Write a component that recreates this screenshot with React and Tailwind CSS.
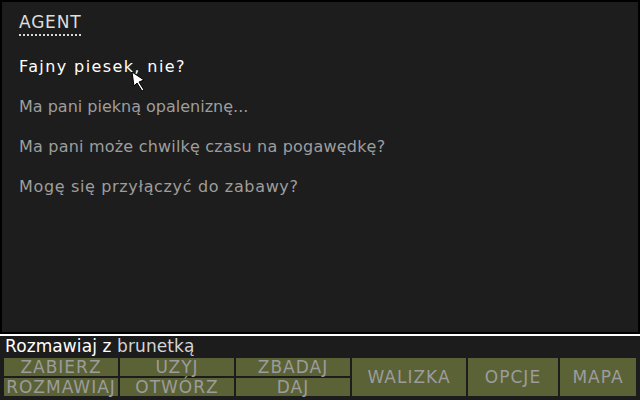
import React from 'react';

const FONT = { fontFamily: '"DejaVu Sans", "Liberation Sans", sans-serif' };

const OPTIONS = [
  { text: 'Fajny piesek, nie?', active: true, track: 'tracking-[1.4px]' },
  { text: 'Ma pani piekną opaleniznę...', track: 'tracking-[0px]' },
  { text: 'Ma pani może chwilkę czasu na pogawędkę?', track: 'tracking-[0.2px]' },
  { text: 'Mogę się przyłączyć do zabawy?', track: 'tracking-[0.65px]' },
];

const SMALL = [
  ['ZABIERZ', 'col-start-1 row-start-1'],
  ['UZYJ', 'col-start-2 row-start-1'],
  ['ZBADAJ', 'col-start-3 row-start-1'],
  ['ROZMAWIAJ', 'col-start-1 row-start-2'],
  ['OTWÓRZ', 'col-start-2 row-start-2'],
  ['DAJ', 'col-start-3 row-start-2'],
];

const BIG = [
  ['WALIZKA', 'col-start-4'],
  ['OPCJE', 'col-start-5'],
  ['MAPA', 'col-start-6'],
];

function Cursor() {
  return (
    <svg className="absolute left-[129px] top-[69px]" width="18" height="22" viewBox="0 0 18 22">
      <path d="M1 1 L3 15 L6 12 L11 20 L13 19 L8 11 L13 9 Z" fill="#ffffff" stroke="#000000" strokeWidth="1" />
    </svg>
  );
}

export default function App() {
  return (
    <div className="w-[640px] h-[400px] bg-[#1c1c1c] flex flex-col overflow-hidden" style={FONT}>
      <div className="relative h-[334px] border-2 border-black bg-[#1d1d1d] pl-[17px] pt-[9px]">
        <div>
          <span className="inline-block text-[17px] leading-[20px] tracking-[0.8px] text-[#dedede] pb-[2px] border-b-2 border-dotted border-[#d8d8d8]">AGENT</span>
        </div>
        <div className="flex flex-col gap-5 mt-[21px]">
          {OPTIONS.map((o) => (
            <div key={o.text} className={`text-[16px] leading-[20px] ${o.track} ${o.active ? 'text-white' : 'text-[#9d9d9d]'}`}>
              {o.text}
            </div>
          ))}
        </div>
        <Cursor />
      </div>
      <div className="h-[2px] bg-white" />
      <div className="h-[22px] pl-[5px] text-[17px] leading-[20px] tracking-[0.1px] text-white">
        Rozmawiaj z <span className="text-[#d4d4d4]">brunetką</span>
      </div>
      <div className="grid grid-cols-[114px_114px_114px_114px_90px_76px] grid-rows-[18px_18px] gap-[2px] px-[4px]">
        {SMALL.map(([label, pos]) => (
          <div key={label} className={`${pos} bg-[#5b6236] flex items-center justify-center text-[17px] leading-none tracking-[1px] text-[#9c9c9c] whitespace-nowrap`}>
            {label}
          </div>
        ))}
        {BIG.map(([label, pos]) => (
          <div key={label} className={`${pos} row-span-2 row-start-1 bg-[#5b6236] flex items-center justify-center text-[17px] leading-none tracking-[1px] text-[#9c9c9c]`}>
            {label}
          </div>
        ))}
      </div>
    </div>
  );
}
